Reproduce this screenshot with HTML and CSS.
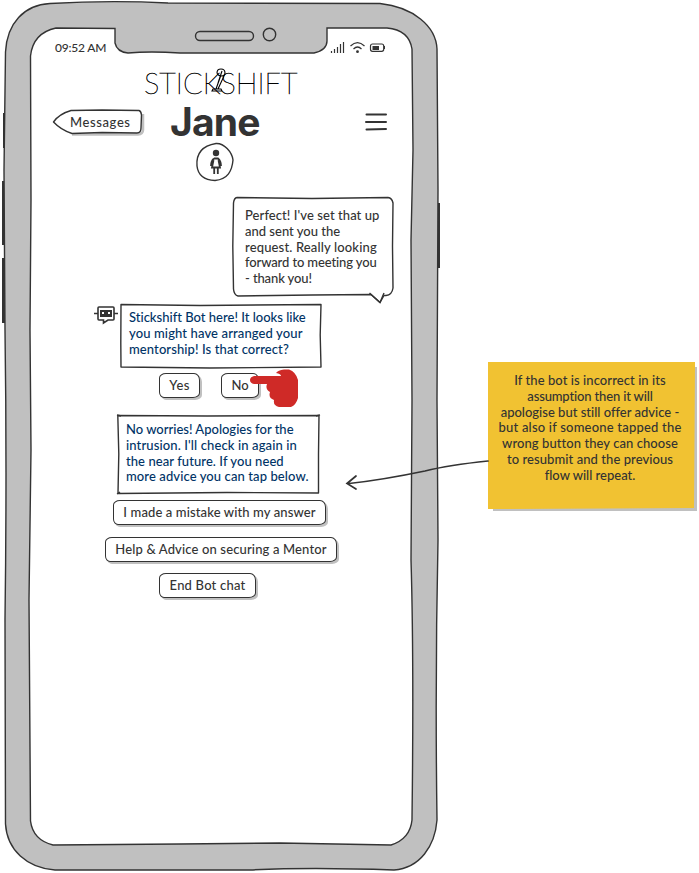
FILE: index.html
```
<!DOCTYPE html>
<html lang="en">
<head>
<meta charset="utf-8">
<title>Stickshift chat</title>
<link rel="stylesheet" href="styles.css">
</head>
<body>
<main class="board">
  <section class="phone">
    <svg class="frame" viewBox="0 0 445 873" aria-hidden="true">
      <path class="key" d="M3 113h4v35H3zM2 181h4v64H2zM2 258h4v65H2zM436 203h4v65h-4z"/>
      <path class="shell" d="M50 3.5Q110 0 168 3L380 3.500C413 7 436 26 437 49L438 190Q438 280 437 400L438 540Q435 680 437 820C435 846 420 868 394 870Q310 867 250 870L55 870C27 868 7 850 5.500 824L5 620Q7 470 5 330L4 170L5.500 52C7 23 24 5 50 3.500Z"/>
      <path class="glass" d="M56 28L115 28.500V43Q117 52 128 53Q150 51 180 53H314Q327 50 327 41V28L387 28Q409 30 412 49L413 150L411 240L412 400L411 560Q414 660 412 820Q410 839 391 845L280 843L180 844L53 845Q33 840 30.500 821L29 600L31 450L30 330L31 200L30.500 56Q33 33 56 28Z"/>
      <rect class="line" x="195.500" y="31.500" width="58" height="9" rx="4.500"/>
      <circle class="line" cx="269.500" cy="34.500" r="6.200"/>
    </svg>

    <div class="status">
      <span class="time">09:52 AM</span>
      <svg class="signals" viewBox="0 0 56 14" aria-hidden="true">
        <path class="bars" d="M1.500 11v2M4.500 9v4M7.500 7v6M10.500 4v9M13.500 2v11"/>
        <path class="thin" d="M20.500 6Q27.500-.8 34.500 6M23.500 9Q27.500 5 31.500 9"/>
        <circle class="solid" cx="27.500" cy="11.700" r="1.400"/>
        <rect class="thin" x="40.500" y="4" width="13.200" height="7.300" rx="2"/>
        <path class="solid" d="M42.500 6H49v4h-6.500zM54 6h1v3h-1z"/>
      </svg>
    </div>

    <div class="logo">
      <span>STICKSHIFT</span>
      <svg class="lever" viewBox="0 0 24 27" aria-hidden="true">
        <path d="M10 6q0-4 4-4 4 0 4 4 0 3-3 3-4 0-5-3M14 8L9 22M17 9L11 22M6 22h8l1 2H5zM15 4l-4 12"/>
      </svg>
    </div>

    <header class="nav">
      <a class="back">
        <svg class="sketch" viewBox="0 0 92 28" aria-hidden="true">
          <path class="shade" d="M20 26.500H86Q91 26 91 22V6"/>
          <path class="paper" d="M19 2.500L50 2L87 2.500Q89 3 89.500 7L89 20Q89 25 85 25L50 24.500L20 25.500Q9 22 1.500 14Q7 6 19 2.500Z"/>
        </svg>
        <span>Messages</span>
      </a>
      <h1>Jane</h1>
      <svg class="menu" viewBox="0 0 22 18" aria-hidden="true"><path d="M1.500 1.500H21M1 9H21M1.500 16.500L21 16"/></svg>
    </header>

    <svg class="avatar" viewBox="0 0 40 40" aria-hidden="true">
      <path class="paper" d="M21 1.500C29 1 37 10 38 18C37 29 33 37 20 38.500C9 38 3 33 2 24C1 12 6 4 21 1.500Z"/>
      <circle class="solid" cx="21" cy="11" r="3.200"/>
      <path class="dress" d="M19 16.500H23Q26 19 26 24M23.500 18L25 25.500H17L18.500 18M19 16.500Q16 19 16 24M19.200 26v6M22.800 26v6"/>
    </svg>

    <div class="bubble">
      <svg class="sketch" viewBox="0 0 164 108" aria-hidden="true">
        <path class="paper" d="M5 1.500L80 2.500L156 1.500Q160 2 161 7L160.500 50L161 92Q160 99 154 99.500H152L148 106.500L139 98.500L80 99L6 100Q2 99 1.500 93L.8 50L1.500 7Q2 2 5 1.500Z"/>
        <path class="line" d="M137.500 97L148 106.500L152 97"/>
      </svg>
      <p class="text"><span class="a1">Perfect! I've set that up</span><span class="a2">and sent you the</span><span class="a3">request. Really looking</span><span class="a4">forward to meeting you</span><span class="a5">- thank you!</span></p>
    </div>

    <div class="botrow">
      <svg class="bot" viewBox="0 0 24 20" aria-hidden="true">
        <path class="head" d="M5 2H19Q20 2 20 3V14Q20 15 19 15H14L9.500 18V15H5Q4 15 4 14V3Q4 2 5 2ZM0 8.500H4M20 8.500H24"/>
        <path class="solid" fill-rule="evenodd" d="M6 5H18V12H6ZM8 7v2h2V7ZM14 7v2h2V7Z"/>
      </svg>
      <div class="card first">
        <svg class="sketch" viewBox="0 0 203 66" aria-hidden="true"><path class="paper" d="M1 1.500L80 2.500L201 1.500L200.200 32L201 64L90 65L1 64L.8 40Z"/></svg>
        <p class="text"><span class="b1">Stickshift Bot here! It looks like</span><span class="b2">you might have arranged your</span><span class="b3">mentorship! Is that correct?</span></p>
      </div>
    </div>

    <div class="replies">
      <button class="btn yes"><span>Yes</span></button>
      <button class="btn no"><span>No</span>
        <svg class="hand" viewBox="0 0 50 40" aria-hidden="true"><path d="M4 7H31Q31 5 26 4Q28 1 34 .5H39Q46 3 48 11V29Q46 36 41 38H29Q23 37 24 31Q18 29 20 23Q15 20 17 15H4Q0 14 0 11Q0 8 4 7Z"/></svg>
      </button>
    </div>

    <div class="card second">
      <svg class="sketch" viewBox="0 0 203 82" aria-hidden="true"><path class="paper" d="M.8 1.500L90 2L202 1.500L201.500 40V79L110 78.500L1 79.500L1.800 40Z"/><path class="line" d="M0 1L4 2M199 2L203 .8M0 80L3 78"/></svg>
      <p class="text"><span class="c1">No worries! Apologies for the</span><span class="c2">intrusion. I'll check in again in</span><span class="c3">the near future. If you need</span><span class="c4">more advice you can tap below.</span></p>
    </div>

    <div class="choices">
      <button class="btn mistake"><span>I made a mistake with my answer</span></button>
      <button class="btn help"><span>Help &amp; Advice on securing a Mentor</span></button>
      <button class="btn end"><span>End Bot chat</span></button>
    </div>
  </section>

  <aside class="note">
    <svg class="notepaper" viewBox="0 0 211 150" aria-hidden="true"><path fill="#c0c0c0" d="M5 5H209V149H5Z"/><path fill="#f1c232" d="M0 0H207V4L206 146L0 147Z"/></svg>
    <p class="text"><span class="d1">If the bot is incorrect in its</span><span class="d2">assumption then it will</span><span class="d3">apologise but still offer advice -</span><span class="d4">but also if someone tapped the</span><span class="d5">wrong button they can choose</span><span class="d6">to resubmit and the previous</span><span class="d7">flow will repeat.</span></p>
    <svg class="arrow" viewBox="0 0 144 36" aria-hidden="true"><path d="M144 6Q105 10 81 16Q38 25 5 28.500M12 21L3 28.500L12 34"/></svg>
  </aside>
</main>
</body>
</html>
```
FILE: styles.css
```
* { box-sizing: border-box; }
body { margin: 0; background: #fff; color: #333; font-family: Lato, "Open Sans", sans-serif; font-size: 13px; font-weight: 500; font-variant-ligatures: none; }
p, h1 { margin: 0; }
svg { display: block; overflow: visible; }
.board { display: flex; width: 699px; height: 873px; overflow: hidden; }
.phone { position: relative; isolation: isolate; width: 445px; height: 873px; flex: none; padding: 38px 57px 0 52px; display: flex; flex-direction: column; }
.frame { position: absolute; z-index: -2; left: 0; top: 0; width: 445px; height: 873px; }
.key { fill: #333; }
.shell { fill: #c0c0c0; stroke: #333; stroke-width: 1.4; }
.glass { fill: #fff; stroke: #333; stroke-width: 1.4; }
.line { fill: none; stroke: #333; stroke-width: 1.4; }
.paper { fill: #fff; stroke: #333; stroke-width: 1.4; stroke-linejoin: round; }
.shade { fill: none; stroke: #c0c0c0; stroke-width: 2.5; }
.solid { fill: #333; }
.thin, .bars { fill: none; stroke: #333; stroke-width: 1.2; }
.sketch { position: absolute; z-index: -1; left: 0; top: 0; width: 100%; height: 100%; }

.status { height: 18px; display: flex; align-items: center; justify-content: space-between; padding-left: 3px; }
.time { font-size: 12px; letter-spacing: -.2px; }
.signals { width: 56px; height: 14px; margin-right: 2px; }

.logo { position: relative; width: 160px; height: 36px; margin: 10px 0 0 92px; font-size: 29px; line-height: 36px; font-weight: 100; color: #000; -webkit-text-stroke: .5px #000; white-space: nowrap; }
.logo span { position: relative; top: -1px; }
.lever { position: absolute; left: 63px; top: 1px; width: 24px; height: 27px; fill: none; stroke: #000; stroke-width: 1.1; }

.nav { height: 40px; display: flex; align-items: center; }
.back { position: relative; width: 92px; height: 28px; padding-left: 18px; line-height: 28px; letter-spacing: .6px; white-space: nowrap; }
.nav h1 { width: 91px; margin-left: 26px; font-family: Inter, sans-serif; font-size: 39px; line-height: 40px; font-weight: 700; letter-spacing: -.8px; white-space: nowrap; }
.menu { width: 22px; height: 18px; margin-left: auto; margin-right: 1px; fill: none; stroke: #333; stroke-width: 2; stroke-linecap: round; }
.avatar { width: 40px; height: 40px; margin: 0 0 0 143px; flex: none; }
.dress { fill: none; stroke: #333; stroke-width: 1.8; }

.text { line-height: 15.750px; }
.text span { display: block; white-space: nowrap; }
.a1 { letter-spacing: .07px; }
.a3 { letter-spacing: .15px; }
.a4, .a5 { letter-spacing: -.12px; }
.b2, .c2 { letter-spacing: .12px; }
.b3, .c4 { letter-spacing: .1px; }
.c3 { letter-spacing: .07px; }
.d2 { letter-spacing: -.15px; }
.d1, .d5, .d6 { letter-spacing: .07px; }
.d4 { letter-spacing: .2px; }
.bubble { position: relative; width: 164px; height: 108px; margin: 14px 0 0 180px; padding: 12px 0 0 13px; flex: none; }
.botrow { display: flex; margin: -1px 0 0 42px; height: 66px; flex: none; }
.bot { width: 24px; height: 20px; margin: 2px 2px 0 0; }
.head { fill: #fff; stroke: #333; stroke-width: 1.6; }
.card { position: relative; color: #003366; flex: none; }
.first { width: 203px; height: 66px; padding: 7px 0 0 9px; }
.replies { display: flex; gap: 21px; height: 26px; margin: 4px 0 0 107px; flex: none; }
.btn { position: relative; height: 25px; padding: 0; border: 1.5px solid #333; border-radius: 7px 6px 7px 5px / 5px 7px 5px 6px; background: #fff; box-shadow: 2px 2px 0 #c0c0c0; color: inherit; font: inherit; line-height: 21px; text-align: center; white-space: nowrap; }
.yes { width: 41px; letter-spacing: .4px; }
.no { width: 38px; }
.hand { position: absolute; left: 28px; top: -5px; width: 50px; height: 40px; fill: #cf2a27; }
.second { width: 203px; height: 82px; margin: 15px 0 0 65px; padding: 8px 0 0 9px; }
.choices { display: flex; flex-direction: column; gap: 12px; margin: 4px 0 0 53px; }
.mistake { width: 213px; margin-left: 8px; letter-spacing: .12px; }
.help { width: 232px; letter-spacing: .14px; }
.end { width: 97px; margin: -1px 0 0 54px; letter-spacing: .2px; }

.note { position: relative; isolation: isolate; flex: none; width: 207px; height: 147px; margin: 362px 0 0 43px; padding-top: 11px; text-align: center; }
.notepaper { position: absolute; z-index: -1; left: 0; top: 0; width: 211px; height: 150px; }
.note .text { margin-right: 3px; }
.arrow { position: absolute; left: -144px; top: 93px; width: 144px; height: 36px; fill: none; stroke: #333; stroke-width: 1.7; stroke-linecap: round; }
```
